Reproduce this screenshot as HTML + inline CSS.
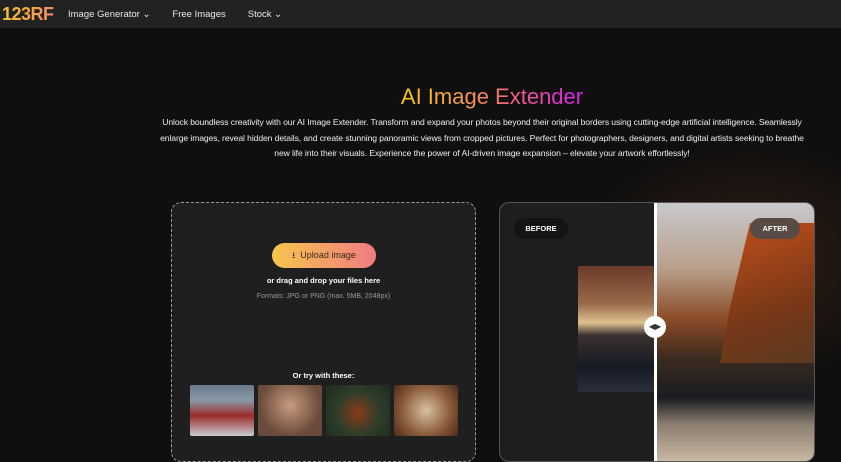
<!DOCTYPE html>
<html><head><style>
*{margin:0;padding:0;box-sizing:border-box}
body{width:841px;height:450px;overflow:hidden;background:#0f0f0f;font-family:"Liberation Sans",sans-serif;color:#fff;position:relative}
.nav{height:28px;background:#222;display:flex;align-items:center;font-size:9.5px;color:#e8e8e8}
.logo{font-weight:bold;font-size:18px;margin-left:2px;letter-spacing:-0.5px;background:linear-gradient(90deg,#f9c433,#f5a04a 50%,#f07a95);-webkit-background-clip:text;color:transparent;width:66px}
.nav span{margin-right:22px}
.glow{position:absolute;left:560px;top:130px;width:380px;height:260px;background:radial-gradient(ellipse at center,rgba(90,45,20,.45),rgba(0,0,0,0) 65%)}
h1{position:absolute;top:84px;left:142px;width:700px;text-align:center;font-size:22px;font-weight:normal}
h1 b{font-weight:normal;background:linear-gradient(90deg,#f9c61a,#f59a4a 35%,#f05a8a 65%,#d81ff0);-webkit-background-clip:text;color:transparent}
p.d{position:absolute;top:115px;left:160px;width:644px;text-align:center;font-size:8.6px;line-height:15.5px;color:#eee;letter-spacing:-0.1px}
.left{position:absolute;left:171px;top:202px;width:305px;height:260px;background:#1f1f1f;border:1.5px dashed #9a9a9a;border-radius:10px}
.btn{position:absolute;left:100px;top:40px;width:104px;height:25px;border-radius:13px;background:linear-gradient(90deg,#f6c64c,#f07b82);color:#3a2a1a;font-size:9px;text-align:center;line-height:25px}
.t{position:absolute;left:0;width:100%;text-align:center}
.thumbs{position:absolute;top:182px;left:18px;display:flex;gap:4px}
.thumbs div{width:64px;height:51px;border-radius:2px}
.right{position:absolute;left:499px;top:202px;width:316px;height:260px;background:#1e1e1e;border:1px solid #555;border-radius:10px;overflow:hidden}
.after{position:absolute;left:156px;top:0;width:160px;height:260px;background:linear-gradient(180deg,#c9c8cc 0%,#b8a08c 25%,#8a4a26 45%,#3a2a20 60%,#1a1c22 75%,#8a7d70 85%,#cdbba5 100%)}
.mtn{position:absolute;left:220px;top:20px;width:100px;height:140px;background:linear-gradient(160deg,#c2501a,#7a3818 60%,#5a3a20);clip-path:polygon(30% 0,100% 0,100% 100%,0 100%,10% 60%)}
.before{position:absolute;left:78px;top:63px;width:78px;height:126px;background:linear-gradient(180deg,#6a3a28 0%,#9a6a4a 30%,#e0c090 45%,#3a3030 55%,#151a24 80%,#2a2e38 100%)}
.line{position:absolute;left:154px;top:0;width:3px;height:260px;background:#fff}
.knob{position:absolute;left:144px;top:113px;width:22px;height:22px;border-radius:50%;background:#fff;color:#333;font-size:8px;text-align:center;line-height:22px}
.lab{position:absolute;top:15px;height:21px;border-radius:11px;font-size:7.5px;font-weight:bold;line-height:21px;text-align:center}
</style></head><body>
<div class="nav"><div class="logo">123RF</div><span>Image Generator ⌄</span><span>Free Images</span><span>Stock ⌄</span></div>
<div class="glow"></div>
<h1><b>AI Image Extender</b></h1>
<p class="d">Unlock boundless creativity with our AI Image Extender. Transform and expand your photos beyond their original borders using cutting-edge artificial intelligence. Seamlessly enlarge images, reveal hidden details, and create stunning panoramic views from cropped pictures. Perfect for photographers, designers, and digital artists seeking to breathe new life into their visuals. Experience the power of AI-driven image expansion – elevate your artwork effortlessly!</p>
<div class="left">
<div class="btn">⭳&nbsp; Upload image</div>
<div class="t" style="top:73px;font-size:7.5px;font-weight:bold">or drag and drop your files here</div>
<div class="t" style="top:90px;font-size:7px;color:#999">Formats: JPG or PNG (max. 5MB, 2048px)</div>
<div class="t" style="top:168px;font-size:7.5px;font-weight:bold">Or try with these:</div>
<div class="thumbs">
<div style="background:linear-gradient(180deg,#6a7a8a,#8a9aa8 30%,#9a2a2a 60%,#c8ccd4)"></div>
<div style="background:radial-gradient(circle at 50% 40%,#c89a80,#6a4a3a 70%)"></div>
<div style="background:radial-gradient(circle at 50% 55%,#8a3a1a,#2e3e2a 50%,#1e2a1e)"></div>
<div style="background:radial-gradient(circle at 50% 50%,#d8c0a0,#8a5a3a 60%,#4a2a1a)"></div>
</div></div>
<div class="right">
<div class="after"></div><div class="mtn"></div>
<div class="before"></div>
<div class="line"></div><div class="knob">◀▶</div>
<div class="lab" style="left:14px;width:54px;background:#141414">BEFORE</div>
<div class="lab" style="left:250px;width:50px;background:#5a4a45">AFTER</div>
</div>
</body></html>
